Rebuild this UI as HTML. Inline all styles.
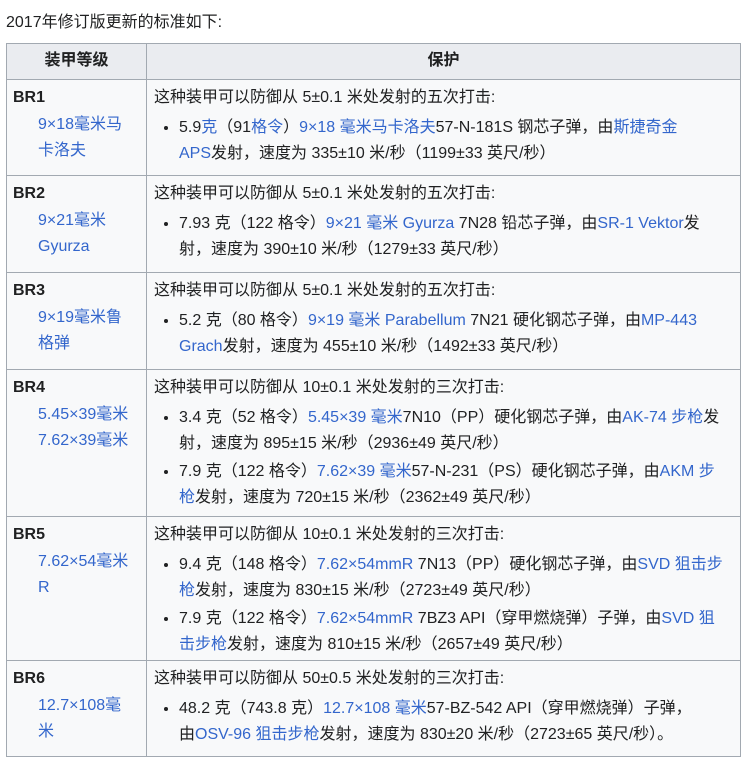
<!DOCTYPE html>
<html><head><meta charset="utf-8"><style>
body{margin:0;background:#fff;font-family:"Liberation Sans","Noto Sans CJK SC",sans-serif;font-size:16px;color:#202122;}
.top{position:absolute;left:6px;top:10px;line-height:26px;}
table{position:absolute;left:6px;top:43px;width:735px;border-collapse:collapse;background:#f8f9fa;}
td,th{border:1px solid #a2a9b1;vertical-align:top;padding:5px 6px 0 6px;line-height:26.5px;white-space:nowrap;}
th{background:#eaecf0;font-weight:bold;text-align:center;padding:4px;height:27px;vertical-align:middle}
td.l{width:127px}
td+td{padding-left:7px}
a{color:#3366cc;text-decoration:none}
.d{padding-left:25px;}
ul{margin:3px 0 0 0;padding:0 0 0 25px;}
li{margin:0 0 1px 0}
</style></head><body>
<div class="top">2017年修订版更新的标准如下:</div>
<table>
<tr><th>装甲等级</th><th>保护</th></tr>
<tr style="height:96px"><td class="l"><b>BR1</b><div class="d"><a>9×18毫米马<br>卡洛夫</a></div></td><td>这种装甲可以防御从 5±0.1 米处发射的五次打击:<ul><li>5.9<a>克</a>（91<a>格令</a>）<a>9×18 毫米马卡洛夫</a>57-N-181S 钢芯子弹，由<a>斯捷奇金</a><br><a>APS</a>发射，速度为 335±10 米/秒（1199±33 英尺/秒）</li></ul></td></tr>
<tr style="height:97px"><td class="l"><b>BR2</b><div class="d"><a>9×21毫米<br>Gyurza</a></div></td><td>这种装甲可以防御从 5±0.1 米处发射的五次打击:<ul><li>7.93 克（122 格令）<a>9×21 毫米 Gyurza</a> 7N28 铅芯子弹，由<a>SR-1 Vektor</a>发<br>射，速度为 390±10 米/秒（1279±33 英尺/秒）</li></ul></td></tr>
<tr style="height:97px"><td class="l"><b>BR3</b><div class="d"><a>9×19毫米鲁<br>格弹</a></div></td><td>这种装甲可以防御从 5±0.1 米处发射的五次打击:<ul><li>5.2 克（80 格令）<a>9×19 毫米 Parabellum</a> 7N21 硬化钢芯子弹，由<a>MP-443</a><br><a>Grach</a>发射，速度为 455±10 米/秒（1492±33 英尺/秒）</li></ul></td></tr>
<tr style="height:147px"><td class="l"><b>BR4</b><div class="d"><a>5.45×39毫米<br>7.62×39毫米</a></div></td><td>这种装甲可以防御从 10±0.1 米处发射的三次打击:<ul><li>3.4 克（52 格令）<a>5.45×39 毫米</a>7N10（PP）硬化钢芯子弹，由<a>AK-74 步枪</a>发<br>射，速度为 895±15 米/秒（2936±49 英尺/秒）</li><li>7.9 克（122 格令）<a>7.62×39 毫米</a>57-N-231（PS）硬化钢芯子弹，由<a>AKM 步</a><br><a>枪</a>发射，速度为 720±15 米/秒（2362±49 英尺/秒）</li></ul></td></tr>
<tr style="height:144px"><td class="l"><b>BR5</b><div class="d"><a>7.62×54毫米<br>R</a></div></td><td>这种装甲可以防御从 10±0.1 米处发射的三次打击:<ul><li>9.4 克（148 格令）<a>7.62×54mmR</a> 7N13（PP）硬化钢芯子弹，由<a>SVD 狙击步</a><br><a>枪</a>发射，速度为 830±15 米/秒（2723±49 英尺/秒）</li><li>7.9 克（122 格令）<a>7.62×54mmR</a> 7BZ3 API（穿甲燃烧弹）子弹，由<a>SVD 狙</a><br><a>击步枪</a>发射，速度为 810±15 米/秒（2657±49 英尺/秒）</li></ul></td></tr>
<tr style="height:96px"><td class="l"><b>BR6</b><div class="d"><a>12.7×108毫<br>米</a></div></td><td>这种装甲可以防御从 50±0.5 米处发射的三次打击:<ul><li>48.2 克（743.8 克）<a>12.7×108 毫米</a>57-BZ-542 API（穿甲燃烧弹）子弹，<br>由<a>OSV-96 狙击步枪</a>发射，速度为 830±20 米/秒（2723±65 英尺/秒）。</li></ul></td></tr>
</table>
</body></html>
